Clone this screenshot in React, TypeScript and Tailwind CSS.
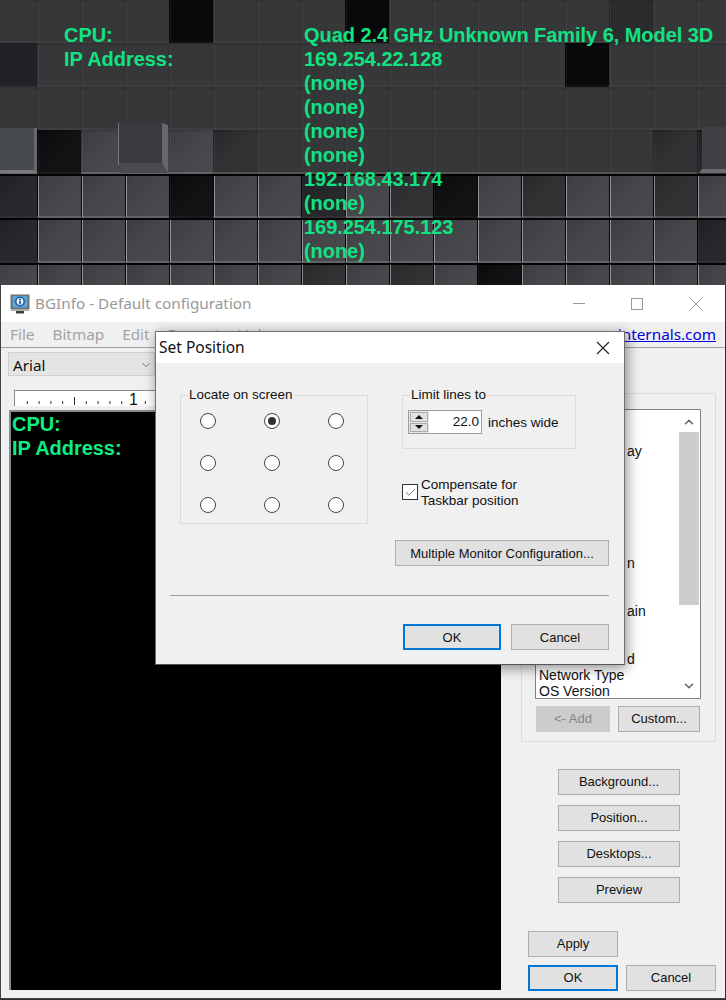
import { ChevronDown, ChevronUp, Check } from "lucide-react";

const TILE_W = 44;
const ROW_Y = [-1, 43, 87, 130, 174, 218, 263, 307];
// one letter per tile: k black, d dark, n dim, m mid, g grey, l light
const TILES = [
  "mmmmkmmmkmmmmmnmmm",
  "dmmmmmmmmmmmmkmmmm",
  "mmmmmmmmmmmmmmmmmm",
  "lkgggnmmmmmmmmmndg",
  "dgggkggdgnkgnggngg",
  "dgggggggggggggggdg",
  "gggggggngngkgggggg",
];
const SHADE: Record<string, string> = {
  k: "#08090b",
  d: "#202124",
  n: "#2a2b2d",
  m: "#363739",
  g: "#404246",
  l: "#4a4c50",
};
const VALUES = [
  "Quad 2.4 GHz Unknown Family 6, Model 3D",
  "169.254.22.128",
  "(none)",
  "(none)",
  "(none)",
  "(none)",
  "192.168.43.174",
  "(none)",
  "169.254.175.123",
  "(none)",
];
// the part of each list row that stays visible beside the dialog
const FIELD_ROWS: { text: string; indent?: string }[] = [
  { text: "" },
  { text: "" },
  { text: "ay", indent: "pl-[88px]" },
  { text: "" },
  { text: "" },
  { text: "" },
  { text: "" },
  { text: "" },
  { text: "" },
  { text: "n", indent: "pl-[88px]" },
  { text: "" },
  { text: "" },
  { text: "ain", indent: "pl-[88px]" },
  { text: "" },
  { text: "" },
  { text: "d", indent: "pl-[88px]" },
  { text: "Network Type" },
  { text: "OS Version" },
];

function Wallpaper() {
  return (
    <svg viewBox="0 0 726 285" className="absolute inset-0 h-[285px] w-[726px]" aria-hidden="true">
      <defs>
        <linearGradient id="sheen" x1="0" y1="0" x2="1" y2="1">
          <stop offset="0" stopColor="#000" stopOpacity="0.12" />
          <stop offset="1" stopColor="#fff" stopOpacity="0.03" />
        </linearGradient>
      </defs>
      <rect width="726" height="285" fill="#363739" />
      {TILES.map((row, r) =>
        row.split("").map((c, i) => {
          const x = i * TILE_W - 7;
          const y = ROW_Y[r];
          const h = ROW_Y[r + 1] - y;
          const strong = r >= 4 || (r === 3 && c !== "m");
          return (
            <g key={`${r}-${i}`}>
              <rect x={x} y={y} width={TILE_W} height={h} fill={SHADE[c]} />
              {strong && <rect x={x} y={y} width={TILE_W} height={h} fill="url(#sheen)" />}
              <rect x={x} y={y} width={TILE_W} height="2" fill="#000" opacity={r >= 4 ? 0.95 : 0.08} />
              <rect x={x} y={y} width="1" height={h} fill="#000" opacity={r >= 4 ? 0.9 : 0.12} />
              <rect x={x + 1} y={y + 2} width="1" height={h - 3} fill="#fff" opacity={r >= 4 && c !== "k" && c !== "d" ? 0.45 : 0.06} />
              <rect x={x} y={y + h - 1.5} width={TILE_W} height="1" fill="#fff" opacity={r >= 3 && c !== "k" && c !== "d" ? 0.3 : 0.07} />
            </g>
          );
        }),
      )}
      <path d="M118 123h44l6 50h-46l-4-6Z" fill="#3d3e41" />
      <path d="M118 123h44v42h-44Z" fill="#3a3b3e" />
      <path d="M162 123l6 2v48l-6-8Z" fill="#66676a" />
      <path d="M118 163h44l6 10h-46Z" fill="#4a4b4e" />
      <path d="M118 123h1v42h-1Z" fill="#77787a" />
      <path d="M0 128h34l3 4v41H0Z" fill="#474a4e" />
      <path d="M0 170h37v3H0Z" fill="#77787a" />
      <path d="M34 128h3v43h-3Z" fill="#66686b" />
      <path d="M702 127h24v42h-24Z" fill="#3f4043" />
      <path d="M699 173l3-4h24v4Z" fill="#6a6b6e" />
    </svg>
  );
}

function WinButton({
  label,
  className = "",
  disabled = false,
  primary = false,
}: {
  label: string;
  className?: string;
  disabled?: boolean;
  primary?: boolean;
}) {
  const tone = disabled
    ? "border border-[#cccccc] bg-[#cccccc] text-[#858585]"
    : primary
      ? "border-2 border-[#0078d7] bg-[#e1e1e1] text-[#111]"
      : "border border-[#adadad] bg-[#e1e1e1] text-[#111]";
  return (
    <button type="button" className={`flex h-[26px] items-center justify-center text-[13px] ${tone} ${className}`}>
      {label}
    </button>
  );
}

function Radio({ checked = false }: { checked?: boolean }) {
  return (
    <span className="flex size-4 items-center justify-center rounded-full border border-[#444] bg-white">
      {checked && <span className="size-2 rounded-full bg-[#333]" />}
    </span>
  );
}

function Ruler() {
  const ticks = Array.from({ length: 40 }, (_, i) => i + 1);
  return (
    <svg viewBox="0 0 487 15" className="h-[15px] w-[487px] overflow-visible" aria-hidden="true">
      {ticks.map((t) =>
        t % 10 === 0 ? null : (
          <rect
            key={t}
            x={t * 11.8}
            y={t % 5 === 0 ? 6 : 10}
            width="1"
            height={t % 5 === 0 ? 8 : 3}
            fill="#333"
          />
        ),
      )}
      <text x="114" y="14" fontSize="16" fill="#111" fontFamily="Liberation Sans">
        1
      </text>
    </svg>
  );
}

function AppIcon() {
  return (
    <svg viewBox="0 0 20 20" className="size-5" aria-hidden="true">
      <rect x="0.5" y="0.5" width="19" height="14.5" fill="#6d7275" />
      <rect x="2.5" y="2" width="15" height="11.5" fill="#5aa5d8" />
      <circle cx="10" cy="7.5" r="5" fill="#1f5ea8" />
      <circle cx="10" cy="7.5" r="3.4" fill="#eef4fa" />
      <rect x="9.2" y="4.6" width="1.6" height="1.5" fill="#1c4f8c" />
      <rect x="9.2" y="6.6" width="1.6" height="3.6" fill="#1c4f8c" />
      <rect x="1" y="15" width="18" height="2" fill="#a9adb0" />
      <rect x="6" y="17" width="8" height="2.5" fill="#3e3e3e" />
    </svg>
  );
}

function SetPositionDialog() {
  return (
    <div className="absolute left-[154px] top-[46px] h-[334px] w-[470px] border border-[#6f6f6f] border-b-[#555] bg-[#f0f0f0] shadow-[2px_3px_12px_rgba(0,0,0,0.45)]">
      <div className="flex h-[31px] items-center justify-between bg-white pl-[3px] pr-[14px]">
        <span className="font-['Noto_Sans'] text-[15.5px] text-[#111]">Set Position</span>
        <svg viewBox="0 0 14 14" className="size-[14px]" fill="none" stroke="#222" strokeWidth="1.1" aria-hidden="true">
          <path d="M1 1l12 12M13 1 1 13" />
        </svg>
      </div>

      <div className="pl-[14px] pr-[15px] pt-[24px] text-[13.5px] text-[#111]">
        <div className="flex pl-[10px]">
          <fieldset className="h-[137px] w-[188px] border border-[#dcdcdc]">
            <legend className="ml-[7px] px-[1px] leading-4">Locate on screen</legend>
            <div className="grid grid-cols-[repeat(3,16px)] gap-x-12 gap-y-[26px] pl-[19px] pt-[10px]">
              <Radio />
              <Radio checked />
              <Radio />
              <Radio />
              <Radio />
              <Radio />
              <Radio />
              <Radio />
              <Radio />
            </div>
          </fieldset>

          <div className="ml-[34px] flex flex-col items-start">
            <fieldset className="h-[62px] w-[174px] border border-[#dcdcdc]">
              <legend className="ml-[7px] px-[1px] leading-4">Limit lines to</legend>
              <div className="flex items-center pl-[5px] pt-[7px]">
                <div className="flex h-6 w-[74px] border border-[#9d9d9d] bg-white">
                  <div className="flex w-[20px] flex-col gap-px bg-[#e6e6e6] p-px">
                    <span className="flex flex-1 items-center justify-center border border-[#adadad] bg-[#e1e1e1]">
                      <span className="h-0 w-0 border-x-[4px] border-b-[4px] border-x-transparent border-b-[#111]" />
                    </span>
                    <span className="flex flex-1 items-center justify-center border border-[#adadad] bg-[#e1e1e1]">
                      <span className="h-0 w-0 border-x-[4px] border-t-[4px] border-x-transparent border-t-[#111]" />
                    </span>
                  </div>
                  <span className="flex-1 pr-[2px] pt-[1px] text-right leading-[20px]">22.0</span>
                </div>
                <span className="ml-[6px] pt-[3px]">inches wide</span>
              </div>
            </fieldset>

            <label className="mt-[27px] flex items-center gap-[3px] leading-4">
              <span className="flex size-4 items-center justify-center border border-[#333] bg-white">
                <Check className="size-[13px] text-[#555]" strokeWidth={1.5} />
              </span>
              <span className="translate-y-px">
                Compensate for
                <br />
                Taskbar position
              </span>
            </label>

            <WinButton label="Multiple Monitor Configuration..." className="-ml-[7px] mt-[32px] w-[214px] pt-px" />
          </div>
        </div>

        <div className="mt-[29px] h-px bg-[#a0a0a0]" />

        <div className="mt-[28px] flex justify-end gap-[10px]">
          <WinButton label="OK" primary className="w-[98px] pt-px" />
          <WinButton label="Cancel" className="w-[98px] pt-px" />
        </div>
      </div>
    </div>
  );
}

export default function App() {
  return (
    <div className="relative h-[1000px] w-[726px] overflow-hidden bg-[#2e2f31] font-['Liberation_Sans',sans-serif]">
      <section className="relative h-[285px]">
        <Wallpaper />
        <div className="relative grid grid-cols-[240px_1fr] pl-[64px] pt-[23px] text-[20px] font-bold leading-6 tracking-[-0.05px] text-[#12e282]">
          <div>
            <p>CPU:</p>
            <p>IP Address:</p>
          </div>
          <div className="whitespace-nowrap">
            {VALUES.map((value, i) => (
              <p key={i}>{value}</p>
            ))}
          </div>
        </div>
      </section>

      <div className="relative h-[714px] w-[725px] border-b border-l border-[#444] bg-[#f0f0f0]">
        <header className="flex h-[37px] items-center bg-white pl-[9px]">
          <AppIcon />
          <span className="ml-[5px] font-['Noto_Sans'] text-[15.3px] text-[#999]">BGInfo - Default configuration</span>
          <div className="ml-auto flex items-center gap-[46px] pr-[23px]">
            <span className="h-px w-3 bg-[#999]" />
            <span className="size-3 border border-[#999]" />
            <svg viewBox="0 0 12 12" className="ml-px size-3" fill="none" stroke="#999" aria-hidden="true">
              <path d="M0 0l12 12M12 0 0 12" />
            </svg>
          </div>
        </header>

        <nav className="flex h-[26px] items-center border-b border-[#a0a0a0] px-[9px] font-['Noto_Sans'] text-[15.3px] text-[#a3a3a3]">
          <span>File</span>
          <span className="ml-[18px]">Bitmap</span>
          <span className="ml-[18px]">Edit</span>
          <span className="ml-[18px]">Format</span>
          <span className="ml-[18px]">Help</span>
          <a href="#" className="ml-auto text-[#0000e0] underline">
            internals.com
          </a>
        </nav>

        <div className="flex">
          <div className="w-[520px] shrink-0">
            <div className="ml-[7px] mt-[4px] flex h-[24px] w-[147px] items-center justify-between border border-[#d0d0d0] bg-[#e4e4e4] pl-[4px] pr-[1px] pt-[2px] font-['Noto_Sans'] text-[15.3px] text-[#111]">
              Arial
              <ChevronDown className="size-[14px] text-[#555]" strokeWidth={1.2} />
            </div>
            <div className="ml-[13px] mt-[14px] h-[16px] w-[488px] border-l border-t border-[#888] bg-white">
              <Ruler />
            </div>
            <div className="ml-[8px] mt-[4px] h-[580px] w-[492px] border-l-2 border-t-2 border-[#8a8a8a] bg-black pl-[1px] text-[20px] font-bold leading-6 tracking-[-0.05px] text-[#0cef80]">
              <p>CPU:</p>
              <p>IP Address:</p>
            </div>
          </div>

          <div className="flex-1">
            <div className="mt-[45px] h-[349px] w-[195px] border border-[#dcdcdc] pl-[13px] pt-[15px]">
              <div className="relative h-[290px] w-[166px] overflow-hidden border border-[#828282] bg-white pl-[3px] pt-[1px] text-[14px] leading-4 text-[#111]">
                {FIELD_ROWS.map((row, i) => (
                  <p key={i} className={`h-4 ${row.indent ?? ""}`}>
                    {row.text}
                  </p>
                ))}
                <div className="absolute bottom-0 right-[1px] top-0 flex w-[20px] flex-col items-center bg-white">
                  <ChevronUp className="mt-[5px] size-[14px] text-[#606060]" strokeWidth={2.5} />
                  <div className="mt-[3px] h-[173px] w-full bg-[#cdcdcd]" />
                  <ChevronDown className="mt-auto mb-[5px] size-[14px] text-[#606060]" strokeWidth={2.5} />
                </div>
              </div>
              <div className="ml-px mt-[7px] flex gap-2">
                <WinButton label="<- Add" disabled className="w-[74px]" />
                <WinButton label="Custom..." className="w-[82px]" />
              </div>
            </div>

            <div className="ml-[37px] mt-[27px] flex w-[122px] flex-col gap-[10px]">
              <WinButton label="Background..." />
              <WinButton label="Position..." />
              <WinButton label="Desktops..." />
              <WinButton label="Preview" />
            </div>

            <div className="ml-[7px] mt-[28px] flex w-[188px] flex-wrap gap-2">
              <WinButton label="Apply" className="w-[90px]" />
              <div className="w-[90px]" />
              <WinButton label="OK" primary className="w-[90px]" />
              <WinButton label="Cancel" className="w-[90px]" />
            </div>
          </div>
        </div>

        <SetPositionDialog />
      </div>
    </div>
  );
}
